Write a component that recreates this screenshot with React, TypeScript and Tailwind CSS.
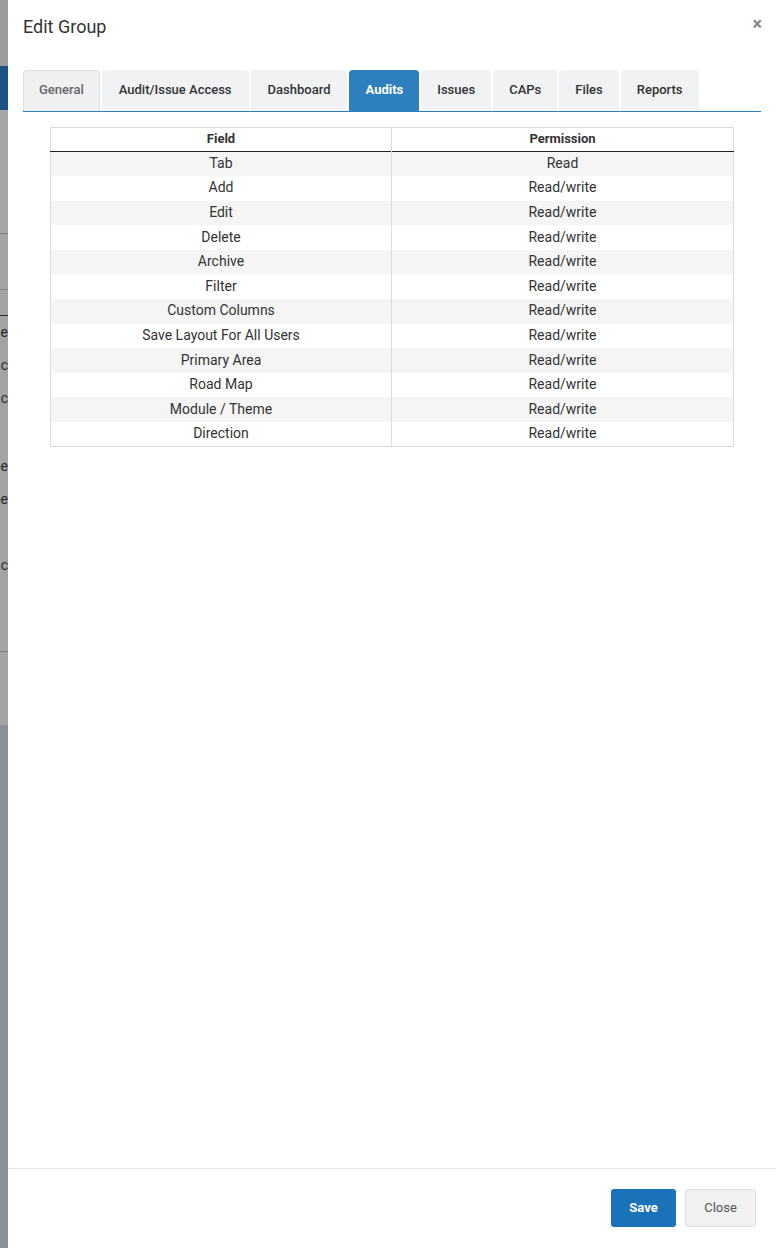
import React from "react";

const tabs: { label: string; pad: string }[] = [
  { label: "General", pad: "px-[15px]" },
  { label: "Audit/Issue Access", pad: "px-[17px]" },
  { label: "Dashboard", pad: "px-[17px]" },
  { label: "Audits", pad: "px-[16px]" },
  { label: "Issues", pad: "px-[16px]" },
  { label: "CAPs", pad: "px-[16px]" },
  { label: "Files", pad: "px-[16px]" },
  { label: "Reports", pad: "px-[16px]" },
];

const rows: [string, string][] = [
  ["Tab", "Read"],
  ["Add", "Read/write"],
  ["Edit", "Read/write"],
  ["Delete", "Read/write"],
  ["Archive", "Read/write"],
  ["Filter", "Read/write"],
  ["Custom Columns", "Read/write"],
  ["Save Layout For All Users", "Read/write"],
  ["Primary Area", "Read/write"],
  ["Road Map", "Read/write"],
  ["Module / Theme", "Read/write"],
  ["Direction", "Read/write"],
];

// sliver of the page behind the dialog, dimmed by the backdrop
const BackdropStrip: React.FC = () => {
  const Frag = ({ text }: { text: string }) => (
    <div className="h-[33px] shrink-0 flex items-center justify-end overflow-hidden whitespace-nowrap text-[14px] text-[#2a2a2a]">
      {text}
    </div>
  );
  return (
    <div className="w-[8px] shrink-0 flex flex-col bg-[#a3a3a3] overflow-hidden">
      <div className="h-[66px] shrink-0 bg-[#9b9b9b]" />
      <div className="h-[44px] shrink-0 bg-[#1c5384]" />
      <div className="h-[124px] shrink-0 bg-[#a6a6a6] border-b border-[#7c7c7c]" />
      <div className="h-[56px] shrink-0 border-b border-[#8a8a8a]" />
      <div className="h-[26px] shrink-0 border-b border-[#2b2b2b]" />
      <Frag text="Name" />
      <Frag text="Groupanc" />
      <Frag text="Groupanc" />
      <div className="h-[35px] shrink-0" />
      <Frag text="Type" />
      <Frag text="Type" />
      <div className="h-[33px] shrink-0" />
      <Frag text="Groupanc" />
      <div className="h-[70px] shrink-0 border-b border-[#7f7f7f]" />
      <div className="h-[73px] shrink-0" />
      <div className="flex-1 bg-[#8c9198]" />
    </div>
  );
};

export default function App() {
  return (
    <div
      className="h-[1248px] w-[776px] flex overflow-hidden"
      style={{ fontFamily: "Roboto, 'Liberation Sans', sans-serif" }}
    >
      <BackdropStrip />
      <div className="flex-1 flex flex-col bg-white">
        {/* header */}
        <div className="h-[58px] flex items-start justify-between pl-[15px] pr-[14px] pt-[15px]">
          <h2 className="text-[18px] text-[#333] leading-[24px]">Edit Group</h2>
          <button className="text-[18px] leading-[14px] font-bold text-[#8a8a8a] mt-[2px]">
            ×
          </button>
        </div>

        {/* body */}
        <div className="flex-1 px-[15px] pt-[12px]">
          <div className="flex items-end gap-[2px] border-b border-[#2e7fbd] h-[42px] w-[738px]">
            {tabs.map(({ label, pad }) => {
              const active = label === "Audits";
              const first = label === "General";
              const base = "h-[41px] pb-[2px] flex items-center rounded-t-[4px] text-[13px] " + pad;
              return (
                <div
                  key={label}
                  className={
                    active
                      ? base + " bg-[#2e7fbd] text-white font-bold"
                      : first
                        ? base + " bg-[#eef0f2] border border-b-0 border-[#dde0e3] text-[#666] font-medium"
                        : base + " bg-[#f1f2f4] text-[#333] font-medium"
                  }
                >
                  {label}
                </div>
              );
            })}
          </div>

          <div className="px-[27px] pt-[15px]">
            <table className="w-[684px] border border-[#dcdcdc] border-collapse text-[#333]">
              <thead>
                <tr className="h-[24px] border-b-[1.5px] border-[#222]">
                  <th className="w-[341px] pb-[1px] text-[13px] font-bold border-r border-[#dcdcdc]">
                    Field
                  </th>
                  <th className="pb-[1px] text-[13px] font-bold">Permission</th>
                </tr>
              </thead>
              <tbody>
                {rows.map(([f, p], i) => (
                  <tr
                    key={f}
                    className={
                      i % 2 === 0 ? "h-[24.6px] bg-[#f5f5f5]" : "h-[24.6px] bg-white"
                    }
                  >
                    <td className="pb-[2px] text-center text-[14px] border-r border-[#dcdcdc] leading-[18px]">
                      {f}
                    </td>
                    <td className="pb-[2px] text-center text-[14px] leading-[18px]">{p}</td>
                  </tr>
                ))}
              </tbody>
            </table>
          </div>
        </div>

        {/* footer */}
        <div className="h-[80px] border-t border-[#e5e5e5] flex items-start justify-end gap-[9px] pr-[20px] pt-[20px]">
          <button className="h-[38px] w-[65px] rounded-[3px] bg-[#1b72b8] text-white text-[13px] font-bold">
            Save
          </button>
          <button className="h-[38px] w-[71px] rounded-[3px] bg-[#f2f2f2] border border-[#dcdcdc] text-[#555] text-[13px]">
            Close
          </button>
        </div>
      </div>
    </div>
  );
}
